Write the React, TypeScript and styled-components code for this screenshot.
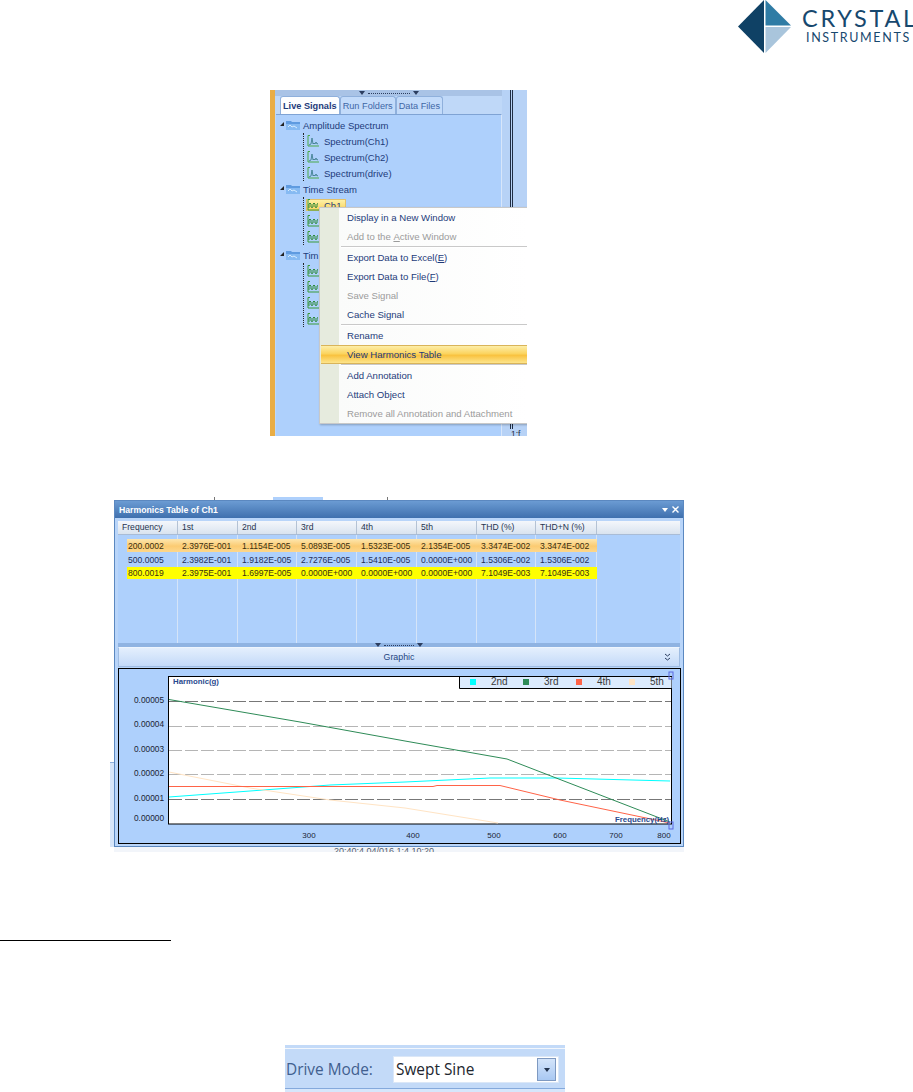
import React from "react";
import styled, { createGlobalStyle } from "styled-components";

const Global = createGlobalStyle`
  html, body { margin: 0; padding: 0; background: #fff; }
  * { box-sizing: border-box; }
`;

const UI = `"Liberation Sans", Arial, sans-serif`;
const NAVY = "#1d3b7a";
const PANE = "#aed0fc";

const Page = styled.div`
  width: 913px;
  height: 1092px;
  overflow: hidden;
  background: #fff;
  display: flex;
  flex-direction: column;
  font-family: ${UI};
`;

/* ---------- header ---------- */
const Header = styled.header`
  height: 90px;
  padding-left: 738px;
  display: flex;
  gap: 11px;
  align-items: flex-start;
`;
const LogoText = styled.div`
  width: 111px;
  flex: none;
  font-family: Lato, "Liberation Sans", sans-serif;
  color: #17486e;
  white-space: nowrap;
`;
const LogoTop = styled.div`
  font-size: 23.5px;
  line-height: 24px;
  margin-top: 6px;
  letter-spacing: 2.7px;
`;
const LogoBottom = styled.div`
  font-size: 12.5px;
  line-height: 14px;
  margin-top: 1px;
  margin-left: 4px;
  letter-spacing: 1.65px;
`;

/* ---------- first screenshot ---------- */
const TreeShot = styled.section`
  margin-left: 270px;
  width: 257px;
  height: 346px;
  flex: none;
  display: flex;
  position: relative;
  overflow: hidden;
  border-left: 5px solid #e9ad45;
  background: #b7d2f6;
`;
const TreePanel = styled.div`
  width: 227px;
  flex: none;
  display: flex;
  flex-direction: column;
  background: #bfd8f8;
`;
const GripBar = styled.div`
  height: 6px;
  display: flex;
  align-items: center;
  justify-content: center;
  gap: 3px;
  background: #a9c3e6;
`;
const Tabs = styled.div`
  height: 18px;
  display: flex;
  padding-left: 5px;
  gap: 0;
  align-items: flex-end;
`;
const Tab = styled.div<{ $active?: boolean }>`
  height: 18px;
  display: flex;
  align-items: center;
  padding: 0 2px;
  font-size: 9.2px;
  font-weight: ${(p) => (p.$active ? 700 : 400)};
  color: ${(p) => (p.$active ? NAVY : "#3f67a6")};
  background: ${(p) => (p.$active ? "#fdfeff" : "#c3dbfa")};
  border: 1px solid #8fb0dc;
  border-bottom: none;
  border-radius: 3px 3px 0 0;
  white-space: nowrap;
`;
const Tree = styled.div`
  flex: 1;
  margin: 0 0 0 1px;
  padding-top: 2px;
  background: ${PANE};
  border-top: 1px solid #7fa3d4;
  border-right: 1px solid #d8e6fa;
  display: flex;
  flex-direction: column;
`;
const FolderRow = styled.div<{ $gap?: number }>`
  height: 16px;
  flex: none;
  margin-top: ${(p) => p.$gap ?? 0}px;
  display: flex;
  align-items: center;
  padding-left: 4px;
  font-size: 9.5px;
  color: ${NAVY};
  white-space: nowrap;
`;
const FolderLabel = styled.span`
  margin-left: 3px;
`;
const Leaves = styled.div`
  margin-left: 27px;
  border-left: 1px dotted #222;
  display: flex;
  flex-direction: column;
`;
const LeafRow = styled.div`
  height: 16px;
  display: flex;
  align-items: center;
  padding-left: 3px;
  font-size: 9.5px;
  color: ${NAVY};
  white-space: nowrap;
`;
const LeafLabel = styled.span`
  margin-left: 4px;
`;
const Selected = styled.span`
  display: inline-flex;
  align-items: center;
  height: 12px;
  padding-right: 4px;
  margin-left: -1px;
  background: linear-gradient(#fdf0a6, #f9d45f);
  border: 1px solid #e4c26a;
`;
const SideStrip = styled.div`
  flex: 1;
  display: flex;
  flex-direction: column;
  padding-left: 8px;
`;
const SideRule = styled.div`
  flex: 1;
  width: 3px;
  border-left: 1px solid #1f2d44;
  border-right: 1px solid #1f2d44;
`;
const SideScrap = styled.div`
  height: 7px;
  margin-left: 1px;
  overflow: hidden;
  font-size: 8.5px;
  line-height: 10px;
  color: #1f2d44;
`;

const Menu = styled.div`
  position: absolute;
  left: 44px;
  top: 117px;
  width: 210px;
  height: 217px;
  background: linear-gradient(90deg, #e6ebde 0, #e6ebde 19px, #fafbfa 19px, #fff 100%);
  border: 1px solid #c8c8c8;
  box-shadow: 1px 1px 2px rgba(0, 0, 0, 0.25);
  display: flex;
  flex-direction: column;
`;
const MenuItem = styled.div<{ $disabled?: boolean; $hot?: boolean }>`
  height: 19px;
  flex: none;
  display: flex;
  align-items: center;
  padding-left: ${(p) => (p.$hot ? "26px" : "27px")};
  margin-left: ${(p) => (p.$hot ? "1px" : "0")};
  font-size: 9.6px;
  white-space: pre;
  color: ${(p) => (p.$disabled ? "#9b9b9b" : NAVY)};
  background: ${(p) =>
    p.$hot ? "linear-gradient(#fdeea8 0, #fbd45f 45%, #f9c23f 55%, #fde58c 100%)" : "transparent"};
  border-block: ${(p) => (p.$hot ? "1px solid #d9b45a" : "none")};
`;
const MenuSep = styled.div`
  height: 2px;
  flex: none;
  margin-left: 21px;
  background: #c9c9c9;
  border-bottom: 1px solid #fff;
`;

/* ---------- second screenshot ---------- */
const HarmonicsShot = styled.section`
  margin-top: 54px;
  margin-left: 110px;
  width: 575px;
  height: 362px;
  flex: none;
  padding: 10px 1px 5px 4px;
  overflow: hidden;
  background:
    linear-gradient(#777, #777) 104px 7px / 1px 3px no-repeat,
    linear-gradient(${PANE}, ${PANE}) 163px 7px / 50px 3px no-repeat,
    linear-gradient(#777, #777) 277px 7px / 1px 3px no-repeat,
    linear-gradient(#8fb0dc, #8fb0dc) 0 272px / 4px 1px no-repeat,
    linear-gradient(#d6e5f9, #d6e5f9) 0 273px / 4px 84px no-repeat;
`;
const Frame = styled.div`
  height: 347px;
  background: #b9d5f9;
  border: 1px solid #5b88c0;
  display: flex;
  flex-direction: column;
`;
const TitleBar = styled.div`
  height: 17px;
  flex: none;
  margin-bottom: 3px;
  display: flex;
  align-items: center;
  justify-content: space-between;
  padding: 0 4px;
  background: linear-gradient(#6b9bd3, #3f70ae);
  color: #fff;
  font-size: 8.7px;
  font-weight: 700;
`;
const TitleButtons = styled.div`
  display: flex;
  align-items: center;
  gap: 4px;
`;
const Content = styled.div`
  margin: 0 3px 0 3px;
  flex: 1;
  display: flex;
  flex-direction: column;
`;
const HeadRow = styled.div`
  height: 14px;
  flex: none;
  display: flex;
  background: linear-gradient(#f4f7fb, #d9e3ef);
  border-bottom: 1px solid #a9bcd6;
`;
const HeadCell = styled.div<{ $w: number }>`
  width: ${(p) => p.$w}px;
  flex: none;
  padding-left: 4px;
  font-size: 8.6px;
  line-height: 13px;
  color: #26344f;
  border-right: 1px solid #b4c2d4;
  white-space: nowrap;
`;
const COLS = [60, 60, 59, 60, 60, 60, 59, 61];
const lineStops = COLS.reduce<number[]>(
  (acc, w) => [...acc, (acc[acc.length - 1] ?? 0) + w],
  []
);
const GridBody = styled.div`
  height: 108px;
  flex: none;
  padding: 4px 0 0 9px;
  display: flex;
  flex-direction: column;
  gap: 1px;
  background-color: ${PANE};
  background-image: ${lineStops.map(() => "linear-gradient(#d5e4f8, #d5e4f8)").join(",")};
  background-repeat: no-repeat;
  background-size: 1px 100%;
  background-position: ${lineStops.map((x) => `${x - 1}px 0`).join(",")};
`;
const DataRow = styled.div<{ $tone?: "hot" | "mark" }>`
  height: ${(p) => (p.$tone === "mark" ? 12 : 13)}px;
  width: 470px;
  flex: none;
  display: flex;
  align-items: center;
  color: ${(p) => (p.$tone ? "#3a2f10" : "#1f2e58")};
  background: ${(p) =>
    p.$tone === "hot"
      ? "linear-gradient(#fde6ae, #fbcb72 55%, #fdd78c)"
      : p.$tone === "mark"
      ? "#ffff00"
      : "transparent"};
`;
const DataCell = styled.div<{ $w: number; $first?: boolean }>`
  width: ${(p) => p.$w}px;
  flex: none;
  padding-left: ${(p) => (p.$first ? 1 : 4)}px;
  font-size: 8.6px;
  white-space: nowrap;
`;
const Splitter = styled.div`
  height: 4px;
  flex: none;
  display: flex;
  align-items: center;
  justify-content: center;
  gap: 3px;
  background: #8fb3e2;
`;
const Dots = styled.div<{ $w: number }>`
  width: ${(p) => p.$w}px;
  border-top: 1px dotted #2c3e60;
`;
const GraphicBar = styled.div`
  height: 20px;
  flex: none;
  position: relative;
  display: flex;
  align-items: center;
  justify-content: center;
  font-size: 8.8px;
  color: #24457f;
  background: linear-gradient(#e4effd, #c4daf8);
  border: 1px solid #9fbce2;
  border-top: 1px solid #eef5fe;
`;
const Chevrons = styled.svg`
  position: absolute;
  right: 8px;
  top: 5px;
`;
const ChartBox = styled.div`
  width: 563px;
  height: 176px;
  flex: none;
  margin-top: 1px;
  border: 1px solid #000;
  background: ${PANE};
`;
const ChartSvg = styled.svg`
  display: block;
  font-family: ${UI};
`;
const ScrapRow = styled.div`
  height: 5px;
  overflow: hidden;
  padding-left: 220px;
  font-size: 9px;
  line-height: 9px;
  color: #55606f;
  background: #f2f5fa;
  white-space: nowrap;
`;

/* ---------- section rule ---------- */
const Rule = styled.div`
  margin-top: 88px;
  width: 171px;
  height: 1px;
  flex: none;
  background: #000;
`;

/* ---------- third screenshot ---------- */
const DriveShot = styled.section`
  margin-top: 104px;
  margin-left: 285px;
  width: 280px;
  height: 47px;
  flex: none;
  padding: 11px 6px 0 1px;
  display: flex;
  align-items: flex-start;
  justify-content: space-between;
  background:
    linear-gradient(#f2f6fc, #f2f6fc) 0 3px / 100% 1px no-repeat,
    linear-gradient(#84a9dc, #84a9dc) 0 43px / 100% 1px no-repeat,
    linear-gradient(#c3daf8, #c3daf8) 0 0 / 100% 43px no-repeat,
    #d6e6fb;
`;
const DriveLabel = styled.label`
  font-family: "Open Sans", "Noto Sans", sans-serif;
  font-size: 15.4px;
  line-height: 27px;
  color: #41608f;
`;
const DriveSelect = styled.div`
  width: 166px;
  height: 27px;
  display: flex;
  align-items: center;
  justify-content: space-between;
  padding: 0 2px 0 2px;
  background: #fff;
  border: 1px solid #dbe7f7;
  font-family: "Open Sans", "Noto Sans", sans-serif;
  font-size: 15.4px;
  color: #22262e;
`;
const DriveButton = styled.div`
  width: 19px;
  height: 23px;
  display: flex;
  align-items: center;
  justify-content: center;
  background: linear-gradient(#d3e4fa, #a9c8f2);
  border: 1px solid #7e99c1;
`;

/* ---------- drawings ---------- */
const Logo = () => (
  <svg width="53" height="53" viewBox="0 0 53 53" style={{ flex: "none" }}>
    <polygon points="26,0 26,53 0,26.5" fill="#0f4165" />
    <polygon points="27.5,0 53,25.5 27.5,25.5" fill="#2f7ca5" />
    <polygon points="27.5,27 53,27 27.5,53" fill="#a9c5dc" />
  </svg>
);
const FolderIcon = () => (
  <svg width="20" height="12" viewBox="0 0 20 12" style={{ flex: "none" }}>
    <polygon points="0,7 4,3 4,7" fill="#222" />
    <path d="M6 2h5l1 1h8v8H6z" fill="#5f9be0" />
    <path d="M6 5h14v6H6z" fill="#86baf2" />
    <path d="M8 8l2-2 2 2 2-1 3 2" stroke="#d6ecff" strokeWidth="1" fill="none" />
  </svg>
);
const SpectrumIcon = () => (
  <svg width="13" height="12" viewBox="0 0 13 12" style={{ flex: "none" }}>
    <path d="M3 .5H1v10.5h11" stroke="#4aa84a" fill="none" />
    <path d="M2 10l2-1 1-6 1 6 1-1 1 1 1-2 1 2 1-.5" stroke="#3f7f8f" strokeWidth=".9" fill="none" />
  </svg>
);
const WaveIcon = () => (
  <svg width="13" height="12" viewBox="0 0 13 12" style={{ flex: "none" }}>
    <path d="M3 .5H1v10.5h11" stroke="#3a9a3a" fill="none" />
    <path d="M2 9V5q1-2 2 0v3q1 1 2 0V5q1-2 2 0v3q1 1 2 0V5l1-.5" stroke="#2e8a3a" fill="none" />
  </svg>
);
const Tri = ({ c = "#2c3e60" }: { c?: string }) => (
  <svg width="6" height="4" viewBox="0 0 6 4">
    <polygon points="0,0 6,0 3,4" fill={c} />
  </svg>
);

const MENU: ({ t: React.ReactNode; d?: boolean; h?: boolean } | null)[] = [
  { t: "Display in a New Window" },
  { t: <>Add to the <u>A</u>ctive Window</>, d: true },
  null,
  { t: <>Export Data to Excel(<u>E</u>)</> },
  { t: <>Export Data to File(<u>F</u>)</> },
  { t: "Save Signal", d: true },
  { t: "Cache Signal" },
  null,
  { t: "Rename" },
  { t: "View Harmonics Table", h: true },
  null,
  { t: "Add Annotation" },
  { t: "Attach Object" },
  { t: "Remove all Annotation and Attachment", d: true },
];

const HEAD = ["Frequency", "1st", "2nd", "3rd", "4th", "5th", "THD (%)", "THD+N (%)"];
const ROWS: { tone?: "hot" | "mark"; cells: string[] }[] = [
  {
    tone: "hot",
    cells: ["200.0002", "2.3976E-001", "1.1154E-005", "5.0893E-005", "1.5323E-005", "2.1354E-005", "3.3474E-002", "3.3474E-002"],
  },
  {
    cells: ["500.0005", "2.3982E-001", "1.9182E-005", "2.7276E-005", "1.5410E-005", "0.0000E+000", "1.5306E-002", "1.5306E-002"],
  },
  {
    tone: "mark",
    cells: ["800.0019", "2.3975E-001", "1.6997E-005", "0.0000E+000", "0.0000E+000", "0.0000E+000", "7.1049E-003", "7.1049E-003"],
  },
];

const GRID = [
  { y: 701, label: "0.00005", ly: 703, c: "#777" },
  { y: 726, label: "0.00004", ly: 727, c: "#b5b5b5" },
  { y: 750, label: "0.00003", ly: 752, c: "#b5b5b5" },
  { y: 774, label: "0.00002", ly: 776, c: "#b5b5b5" },
  { y: 799, label: "0.00001", ly: 801, c: "#777" },
];
const XTICKS = [
  [309, "300"],
  [413, "400"],
  [494, "500"],
  [560, "600"],
  [616, "700"],
  [664, "800"],
] as const;
const LEGEND = [
  [473, "#00ffff", 491, "2nd"],
  [526, "#2e8b57", 544, "3rd"],
  [579, "#ff6347", 597, "4th"],
  [632, "#ffe4c4", 650, "5th"],
] as const;

const Chart = () => (
  <ChartSvg width="561" height="174" viewBox="119 669 561 174">
    <rect x="168.5" y="676.5" width="503" height="147.5" fill="#fff" stroke="#000" />
    {GRID.map((g) => (
      <line key={g.y} x1="169" x2="671" y1={g.y + 0.5} y2={g.y + 0.5} stroke={g.c} strokeDasharray="13 3" />
    ))}
    {GRID.map((g) => (
      <text key={g.label} x="134" y={g.ly} fontSize="8.3" fill="#1b1f33">
        {g.label}
      </text>
    ))}
    <text x="134" y="821" fontSize="8.3" fill="#1b1f33">0.00000</text>
    <text x="173" y="684" fontSize="7.8" fontWeight="700" fill="#2a4a8e">Harmonic(g)</text>
    <polyline points="169,797 250,791 330,785 405,782 490,778 557,778 670,781" fill="none" stroke="#00ffff" />
    <polyline points="169,772 250,788 330,800 405,808 498,823" fill="none" stroke="#ffe4c4" />
    <polyline points="169,786.5 433,786.5 437,785.5 500,785.5 560,800 670,823" fill="none" stroke="#ff6347" />
    <polyline points="169,699.5 300,722 405,741 507,759 670,822" fill="none" stroke="#2e8b57" />
    <rect x="459.5" y="677" width="212" height="11" fill="#dcebfd" stroke="none" />
    <path d="M459.5 677v11.5h212" fill="none" stroke="#000" />
    {LEGEND.map(([sx, c, tx, t]) => (
      <g key={t}>
        <rect x={sx - 3} y="679" width="6" height="6" fill={c} />
        <text x={tx} y="684.5" fontSize="10" fill="#3a3a3a">{t}</text>
      </g>
    ))}
    <text x="615" y="822" fontSize="7.8" fontWeight="700" fill="#2a4a8e">Frequency(Hz)</text>
    <rect x="669" y="672" width="4" height="7" fill="none" stroke="#5a68e0" />
    <rect x="669" y="822" width="4" height="7" fill="none" stroke="#5a68e0" />
    {XTICKS.map(([x, t]) => (
      <text key={t} x={x} y="838" fontSize="8" textAnchor="middle" fill="#1b1f33">{t}</text>
    ))}
  </ChartSvg>
);

export default function App() {
  return (
    <Page>
      <Global />
      <Header>
        <Logo />
        <LogoText>
          <LogoTop>CRYSTAL</LogoTop>
          <LogoBottom>INSTRUMENTS</LogoBottom>
        </LogoText>
      </Header>

      <TreeShot>
        <TreePanel>
          <GripBar>
            <Tri />
            <Dots $w={42} />
            <Tri />
          </GripBar>
          <Tabs>
            <Tab $active>Live Signals</Tab>
            <Tab>Run Folders</Tab>
            <Tab>Data Files</Tab>
          </Tabs>
          <Tree>
            <FolderRow>
              <FolderIcon />
              <FolderLabel>Amplitude Spectrum</FolderLabel>
            </FolderRow>
            <Leaves>
              {["Spectrum(Ch1)", "Spectrum(Ch2)", "Spectrum(drive)"].map((l) => (
                <LeafRow key={l}>
                  <SpectrumIcon />
                  <LeafLabel>{l}</LeafLabel>
                </LeafRow>
              ))}
            </Leaves>
            <FolderRow>
              <FolderIcon />
              <FolderLabel>Time Stream</FolderLabel>
            </FolderRow>
            <Leaves>
              <LeafRow>
                <Selected>
                  <WaveIcon />
                  <LeafLabel>Ch1</LeafLabel>
                </Selected>
              </LeafRow>
              <LeafRow><WaveIcon /></LeafRow>
              <LeafRow><WaveIcon /></LeafRow>
            </Leaves>
            <FolderRow $gap={2}>
              <FolderIcon />
              <FolderLabel>Tim</FolderLabel>
            </FolderRow>
            <Leaves>
              <LeafRow><WaveIcon /></LeafRow>
              <LeafRow><WaveIcon /></LeafRow>
              <LeafRow><WaveIcon /></LeafRow>
              <LeafRow><WaveIcon /></LeafRow>
            </Leaves>
          </Tree>
        </TreePanel>
        <SideStrip>
          <SideRule />
          <SideScrap>1:f</SideScrap>
        </SideStrip>
        <Menu>
          {MENU.map((m, i) =>
            m ? (
              <MenuItem key={i} $disabled={m.d} $hot={m.h}>
                {m.t}
              </MenuItem>
            ) : (
              <MenuSep key={i} />
            )
          )}
        </Menu>
      </TreeShot>

      <HarmonicsShot>
        <Frame>
          <TitleBar>
            Harmonics Table of Ch1
            <TitleButtons>
              <Tri c="#fff" />
              <svg width="7" height="7" viewBox="0 0 7 7">
                <path d="M.5.5l6 6M6.5.5l-6 6" stroke="#fff" strokeWidth="1.4" />
              </svg>
            </TitleButtons>
          </TitleBar>
          <Content>
            <HeadRow>
              {HEAD.map((h, i) => (
                <HeadCell key={h} $w={COLS[i]}>{h}</HeadCell>
              ))}
            </HeadRow>
            <GridBody>
              {ROWS.map((r) => (
                <DataRow key={r.cells[0]} $tone={r.tone}>
                  {r.cells.map((c, i) => (
                    <DataCell key={i} $first={i === 0} $w={i === 0 ? 51 : COLS[i]}>
                      {c}
                    </DataCell>
                  ))}
                </DataRow>
              ))}
            </GridBody>
            <Splitter>
              <Tri />
              <Dots $w={30} />
              <Tri />
            </Splitter>
            <GraphicBar>
              Graphic
              <Chevrons width="7" height="8" viewBox="0 0 7 8">
                <path d="M1 1l2.5 2L6 1M1 5l2.5 2L6 5" stroke="#2c3e60" fill="none" />
              </Chevrons>
            </GraphicBar>
            <ChartBox>
              <Chart />
            </ChartBox>
          </Content>
        </Frame>
        <ScrapRow>20:40:4 04/016 1:4 10:20</ScrapRow>
      </HarmonicsShot>

      <Rule />

      <DriveShot>
        <DriveLabel>Drive Mode:</DriveLabel>
        <DriveSelect>
          Swept Sine
          <DriveButton>
            <Tri c="#23344f" />
          </DriveButton>
        </DriveSelect>
      </DriveShot>
    </Page>
  );
}
